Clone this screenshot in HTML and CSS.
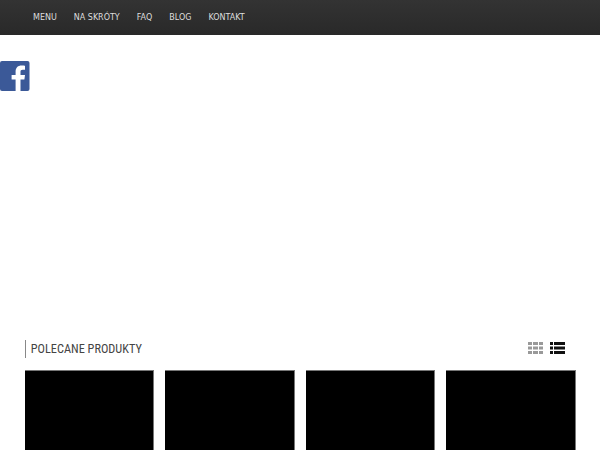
FILE: index.html
```html
<!doctype html>
<html lang="pl">
<head>
  <meta charset="UTF-8">
  <meta name="viewport" content="width=device-width, initial-scale=1.0">
  <title>Polecane produkty</title>
  <link rel="stylesheet" href="styles.css">
</head>
<body>
  <nav class="topbar">
    <a href="#">Menu</a>
    <a href="#">Na skróty</a>
    <a href="#">FAQ</a>
    <a href="#">Blog</a>
    <a href="#">Kontakt</a>
  </nav>

  <div class="social">
    <a href="#" class="fb" aria-label="Facebook">
      <svg width="30" height="30" viewBox="0 0 30 30">
        <rect width="29.5" height="30" rx="2" fill="#3b5998"/>
        <path d="M20.5 30V18.4h3.9l.6-4.5h-4.500v-2.900c0-1.300.4-2.200 2.300-2.200H25V4.700c-.4-.1-1.900-.2-3.500-.2-3.500 0-5.900 2.100-5.900 6v3.400h-4v4.500h4V30z" fill="#fff"/>
      </svg>
    </a>
  </div>

  <main class="featured">
    <div class="featured-head">
      <h2>Polecane produkty</h2>
      <div class="view-switch">
        <svg class="view-grid" width="15" height="12" viewBox="0 0 15 12">
          <path d="M0 0h4v3H0zM5 0h5v3H5zM11 0h4v3h-4zM0 4.500h4v3H0zM5 4.500h5v3H5zM11 4.500h4v3h-4zM0 9h4v3H0zM5 9h5v3H5zM11 9h4v3h-4z"/>
        </svg>
        <svg class="view-list" width="15" height="12" viewBox="0 0 15 12">
          <path d="M0 0h3v3H0zM4 0h11v3H4zM0 4.500h3v3H0zM4 4.500h11v3H4zM0 9h3v3H0zM4 9h11v3H4z"/>
        </svg>
      </div>
    </div>
    <div class="products">
      <div class="product"></div>
      <div class="product"></div>
      <div class="product"></div>
      <div class="product"></div>
    </div>
  </main>
</body>
</html>
```

FILE: styles.css
```css
html, body {
    height: 450px;
    overflow: hidden;
}

body {
    margin: 0;
    background-color: #fff;
    font-family: 'DejaVu Sans', sans-serif;
}

.topbar {
    display: flex;
    gap: 17px;
    align-items: center;
    height: 35px;
    padding-left: 33px;
    background: linear-gradient(to bottom, #333, #292929);
}

.topbar a {
    color: #ddd;
    font-size: 8px;
    text-decoration: none;
    text-transform: uppercase;
}

.social {
    margin-top: 26px;
    height: 30px;
}

.fb {
    display: block;
    width: 30px;
    height: 30px;
}

.featured {
    margin-top: 249px;
    padding: 0 24px 0 24.8px;
}

.featured-head {
    display: flex;
    justify-content: space-between;
    align-items: center;
    height: 18px;
}

.featured-head h2 {
    margin: 0;
    padding: 1px 0 0 5px;
    border-left: 1px solid #888;
    color: #444;
    font-family: Roboto, sans-serif;
    font-size: 12.3px;
    font-stretch: 75%;
    font-weight: 400;
    line-height: 17px;
    text-transform: uppercase;
}

.view-switch {
    display: flex;
    gap: 7px;
    padding-right: 11px;
    margin-top: -2px;
}

.view-grid {
    fill: #999;
}

.view-list {
    fill: #111;
}

.products {
    display: grid;
    grid-template-columns: repeat(4, 1fr);
    gap: 11px;
    margin-top: 12px;
}

.product {
    height: 100px;
    background-color: #000;
    border-top: 1px solid #777;
    border-right: 1px solid #777;
}
```
